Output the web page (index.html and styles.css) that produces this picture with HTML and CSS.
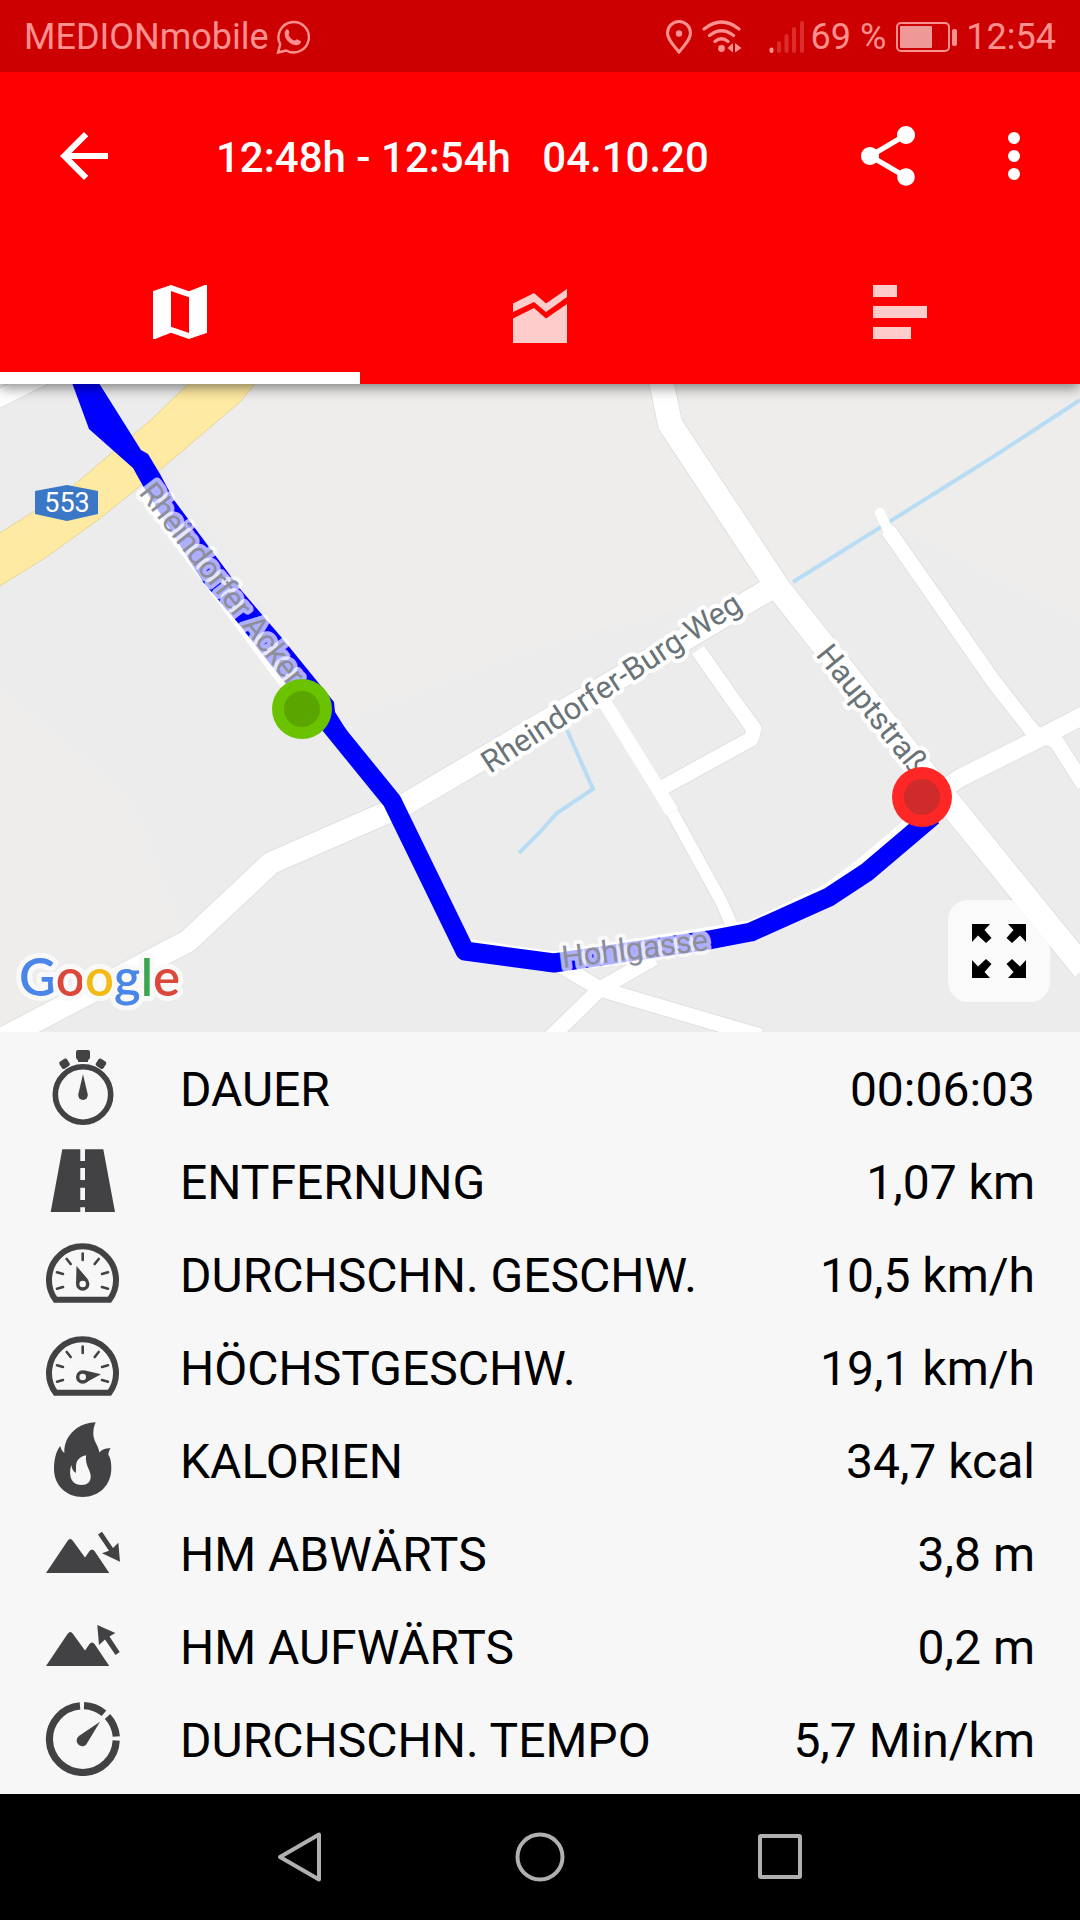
FILE: index.html
```html
<!DOCTYPE html>
<html lang="de">
<head>
<meta charset="utf-8">
<meta name="viewport" content="width=device-width, initial-scale=1">
<title>12:48h - 12:54h 04.10.20</title>
<link rel="stylesheet" href="styles.css">
</head>
<body>
<div class="screen">
  <header class="header">
    <div class="status">
      <span>MEDIONmobile</span>
      <svg class="status-whatsapp" width="34" height="34" viewBox="0 0 34 34" fill="none" stroke="currentColor" stroke-width="2.4">
        <path d="M2 32.500l2.200-8.200A15.200 15.200 0 1 1 10.200 30.500z"/>
        <path d="M9.500 10.500c1.500-2.300 3-1.200 3.800 1.500.5 1.600-1.100 2-.7 3 1.300 2.800 3.300 4.600 5.800 5.600 1.200.4 1.600-1.700 3-1.200 3.500 1.400 4.300 2 3 3.900-2 2.800-6 2.300-9.600.2-4.500-2.700-7.700-8.500-5.300-13z" fill="currentColor" stroke="none"/>
      </svg>
      <div class="status-right">
        <svg width="28" height="34" viewBox="0 0 28 34" fill="none" stroke="currentColor" stroke-width="3">
          <path d="M14 32C8 25 2.500 19 2.500 13a11.500 11.500 0 0 1 23 0C25.500 19 20 25 14 32z"/>
          <circle cx="14" cy="13.500" r="3.200" fill="currentColor" stroke="none"/>
        </svg>
        <svg class="status-wifi" width="42" height="34" viewBox="0 0 42 34" fill="none" stroke="currentColor" stroke-width="3.200" stroke-linecap="round">
          <path d="M3 9Q20.500-5 38 9M8.500 15.500q12-9.500 24 0M14 21.500q6.500-5.500 13 0"/>
          <circle cx="20.500" cy="28.500" r="3.400" fill="currentColor" stroke="none"/>
          <path d="M32 23v9.500l-5.500-4.500zM34 23l6.500 5-6.500 4.500z" fill="currentColor" stroke="none"/>
        </svg>
        <svg width="36" height="34" viewBox="0 0 36 34" stroke-width="4" stroke-linecap="round" stroke="#dc2c2c">
          <path d="M2.500 29.500v1.500" stroke="currentColor"/>
          <path d="M10 23v8M17.500 16v15M25 9v22M33 3v28"/>
        </svg>
        <span class="status-percent">69 %</span>
        <svg width="62" height="30" viewBox="0 0 62 30">
          <rect x="1" y="1" width="52" height="28" rx="4" fill="none" stroke="currentColor" stroke-width="2"/>
          <rect x="4" y="4" width="32" height="22" rx="1" fill="#ee9898"/>
          <rect x="56" y="7" width="5" height="17" rx="2" fill="currentColor"/>
        </svg>
        <time class="status-time">12:54</time>
      </div>
    </div>

    <div class="appbar">
      <button class="icon-button" type="button" aria-label="Zurück">
        <svg viewBox="0 0 24 24"><path d="M20 11H7.830l5.590-5.590L12 4l-8 8 8 8 1.410-1.410L7.830 13H20v-2z"/></svg>
      </button>
      <h1 class="title">12:48h - 12:54h&nbsp;&nbsp; 04.10.20</h1>
      <button class="icon-button" type="button" aria-label="Teilen">
        <svg viewBox="0 0 24 24"><path d="M18 16.080c-.76 0-1.440.3-1.960.77L8.910 12.700c.05-.23.090-.46.090-.7s-.04-.47-.09-.7l7.050-4.110c.54.5 1.250.81 2.040.81 1.660 0 3-1.340 3-3s-1.340-3-3-3-3 1.340-3 3c0 .24.040.47.090.7L8.040 9.810C7.500 9.310 6.790 9 6 9c-1.660 0-3 1.340-3 3s1.340 3 3 3c.79 0 1.500-.31 2.040-.81l7.120 4.160c-.05.21-.08.43-.08.65 0 1.610 1.310 2.920 2.920 2.920s2.920-1.310 2.920-2.920-1.310-2.920-2.920-2.920z"/></svg>
      </button>
      <button class="icon-button" type="button" aria-label="Mehr">
        <svg viewBox="0 0 24 24"><circle cx="12" cy="6" r="2"/><circle cx="12" cy="12" r="2"/><circle cx="12" cy="18" r="2"/></svg>
      </button>
    </div>

    <nav class="tabs" role="tablist">
      <button class="tab tab-active" type="button" role="tab" aria-selected="true" aria-label="Karte">
        <svg viewBox="0 0 24 24"><path d="M20.500 3l-.16.030L15 5.100 9 3 3.360 4.900c-.21.070-.36.250-.36.480V20.500c0 .28.220.5.500.5l.16-.03L9 18.900l6 2.100 5.640-1.900c.21-.07.360-.25.360-.48V3.500c0-.28-.22-.5-.5-.5zM15 19l-6-2.110V5l6 2.110V19z"/><path d="M3 5v16h1V5zM20 3v16h1V3z"/></svg>
      </button>
      <button class="tab" type="button" role="tab" aria-selected="false" aria-label="Diagramm">
        <svg viewBox="0 0 72 72"><path d="M9 43.500L30 32.500 51 42.500 63 28V67H9z" fill="none"/><path d="M9 42.500L30 32 42 42.500 63 28V67H9z"/><path d="M9 27.500L30 17 42 27.500 63 13v8L42 36 30 26 9 36z"/></svg>
      </button>
      <button class="tab" type="button" role="tab" aria-selected="false" aria-label="Runden">
        <svg viewBox="0 0 72 72"><path d="M9 9h24v12H9zM9 30h54v12H9zM9 51h38v12H9z"/></svg>
      </button>
    </nav>
  </header>

  <main class="content">
    <section class="map" aria-label="Karte">
      <svg class="map-canvas" viewBox="0 384 1080 648" preserveAspectRatio="xMidYMid slice">
        <rect y="384" width="1080" height="648" fill="#ececec"/>
        <path d="M200 384H1080V620L880 515 790 582 540 645 340 720 180 480zM0 690L130 800 180 930 0 1026z" fill="#eeedec"/>

        <path d="M793 582L996 455 1022 438 1080 400M567 730L593 789 557 813 540 832 519 853" fill="none" stroke="#b9dcf5" stroke-width="4"/>

        <path d="M192 380L151 420 114 451 74 485 33 512-5 536V589L45 558 98 520 160 470 241 401 258 380z" fill="#feeaa2" stroke="#e6d49a"/>

        <g fill="none" stroke-linejoin="round">
          <g stroke="#e0e0df">
            <path d="M-10 403L48 374" stroke-width="19"/>
            <path d="M661 380L670 424 779 589 922 770 952 806 1084 969" stroke-width="26"/>
            <path d="M-10 1045L188 941 271 863 404 805 775 586" stroke-width="24"/>
            <path d="M698 650L733 700 754 729 751 739 660 789" stroke-width="17"/>
            <path d="M600 695L657 787 672 812 721 901 734 930" stroke-width="14"/>
            <path d="M940 792L960 778 1040 738 1084 715" stroke-width="20"/>
            <path d="M888 530L994 682 1034 733 1056 741 1084 785" stroke-width="17"/>
            <path d="M555 962L600 989 760 1036M550 1038L600 989 654 958" stroke-width="17"/>
          </g>
          <g stroke="#fff">
            <path d="M-10 403L48 374" stroke-width="17"/>
            <path d="M661 380L670 424 779 589 922 770 952 806 1084 969" stroke-width="24"/>
            <path d="M-10 1045L188 941 271 863 404 805 775 586" stroke-width="22"/>
            <path d="M698 650L733 700 754 729 751 739 660 789" stroke-width="15"/>
            <path d="M600 695L657 787 672 812" stroke-width="14"/>
            <path d="M672 812L721 901 734 930" stroke-width="12"/>
            <path d="M940 792L960 778 1040 738 1084 715" stroke-width="18"/>
            <path d="M880 513L888 530" stroke-width="10" stroke-linecap="round"/>
            <path d="M888 530L994 682 1034 733 1056 741 1084 785" stroke-width="15"/>
            <path d="M555 962L600 989 760 1036M550 1038L600 989 654 958" stroke-width="15"/>
            <path d="M465 948L554 961 751 930 829 893 866 865 928 812" stroke-width="19"/>
            <path d="M146 488L292 684" stroke-width="22"/>
          </g>
        </g>

        <path d="M71 380L89 429 133 468 143 486 203 582 238 623 300 702 392 802 335 712 334 702 282 638 241 590 174 500 160 474 148 454 141 450 97 380z" fill="#00f"/>
        <path d="M318 710L392 801 465 951 554 963 709 940 751 932 829 897 867 872 933 816" fill="none" stroke="#00f" stroke-width="19" stroke-linejoin="round"/>

        <path d="M35 491L67 485 98 491V514L67 521 35 514z" fill="#3a77c6"/>
        <text class="shield" x="67" y="512">553</text>

        <text class="street" transform="translate(490 774) rotate(-33)">Rheindorfer-Burg-Weg</text>
        <text class="street" transform="translate(815 655) rotate(51)">Hauptstraße</text>
        <text class="street street-under" transform="translate(138 493) rotate(52)">Rheindorfer Acker</text>
        <text class="street street-under" transform="translate(563 968) rotate(-7)">Hohlgasse</text>

        <circle cx="302" cy="709" r="30" fill="#6bc300"/><circle cx="302" cy="709" r="18" fill="#5ba500"/>
        <circle cx="922" cy="797" r="30" fill="#ff2626"/><circle cx="922" cy="797" r="18" fill="#cf2b2b"/>

        <text class="logo" x="19" y="996"><tspan fill="#4a86e8">G</tspan><tspan fill="#db473a">o</tspan><tspan fill="#f3ba15">o</tspan><tspan fill="#4a86e8">g</tspan><tspan fill="#3da653">l</tspan><tspan fill="#db473a">e</tspan></text>
      </svg>
      <button class="fullscreen" type="button" aria-label="Vollbild">
        <svg width="54" height="54" viewBox="0 0 54 54">
          <path id="corner" d="M0 0H18L12.500 6 19.500 14 14 19 6 11.500 0 18z"/>
          <use href="#corner" transform="matrix(-1 0 0 1 54 0)"/>
          <use href="#corner" transform="matrix(1 0 0 -1 0 54)"/>
          <use href="#corner" transform="matrix(-1 0 0 -1 54 54)"/>
        </svg>
      </button>
    </section>

    <dl class="stats">
      <div class="stat">
        <svg class="stat-icon" viewBox="0 0 75 75">
          <circle cx="38" cy="44.500" r="27.700" fill="none" stroke="currentColor" stroke-width="5.600"/>
          <path d="M33 0h10q2 0 2 2v6l-2 2.500V12H33v-1.500L31 8V2q0-2 2-2z"/>
          <rect x="15" y="9.500" width="9" height="8.500" rx="2" transform="rotate(-32 19.500 13.700)"/>
          <rect x="51.500" y="9.500" width="9" height="8.500" rx="2" transform="rotate(32 56 13.700)"/>
          <path d="M38 24.300l4.700 20a4.800 4.800 0 1 1-9.400 0z"/>
        </svg>
        <dt>DAUER</dt><dd>00:06:03</dd>
      </div>
      <div class="stat">
        <svg class="stat-icon" viewBox="0 0 75 75"><path fill-rule="evenodd" d="M17.300 6.300H58.300L70 69H5.700zM35.300 6.300V18H40V6.300zM35.300 25V37H40V25zM35.300 44.700V57H40V44.700zM35.300 64.300V69H40V64.300z"/></svg>
        <dt>ENTFERNUNG</dt><dd>1,07 km</dd>
      </div>
      <div class="stat">
        <svg class="stat-icon" viewBox="0 0 75 75">
          <g id="dial" fill="none" stroke="currentColor">
            <path d="M10.500 63.700A33.500 33.500 0 1 1 64.500 63.700z" stroke-width="6"/>
            <path d="M37.700 17.500V24M21.700 23l4 5M53.700 23l-4 5M12 36.300l6 1.700M63 36.300l-6 1.700M12 52.700l6-1.700M63 52.700l-6-1.700" stroke-width="2.600" stroke-linecap="round"/>
            <circle cx="37.700" cy="48" r="5" stroke-width="3.400"/>
          </g>
          <path d="M31.500 30L43.500 44Q37 40 34 45L31 48z"/>
        </svg>
        <dt>DURCHSCHN. GESCHW.</dt><dd>10,5 km/h</dd>
      </div>
      <div class="stat">
        <svg class="stat-icon" viewBox="0 0 75 75">
          <use href="#dial"/>
          <path d="M56 45.300L39 54.500Q43 52 43 48 43 44 39 41.300z"/>
        </svg>
        <dt>HÖCHSTGESCHW.</dt><dd>19,1 km/h</dd>
      </div>
      <div class="stat">
        <svg class="stat-icon" viewBox="0 0 75 75"><path fill-rule="evenodd" d="M50.700.3C43 .5 37 2.500 31.700 6.300 24 12 19 20 19.300 31 17 29 16 27 15.300 24 11 29 9 38 9 47 9 63 21 75 37.700 75 54 75 66.500 63 66.300 46 66.300 40 65.500 36 63.300 32.500 63.500 30 64.500 28 65.700 26.300 61 26 57.500 27 54.300 30.500 54 24 48.500 20 48.300 12 48.300 7 49 4 50.700.3zM41 33.300C36 34 32 38 31.300 41.500 30.500 45 31.500 48 30.700 51 28 49 27 47 26.300 43 25 47 25 50 25.300 53 26 60 31 63 36.700 63 42 63 46 60 45.700 54 45.500 48 40 44 41 33.300z"/></svg>
        <dt>KALORIEN</dt><dd>34,7 kcal</dd>
      </div>
      <div class="stat">
        <svg class="stat-icon" viewBox="0 0 75 75">
          <path id="peaks" d="M1 58L22.500 26Q25.300 22 28 26L40 42.500 44.500 36Q47 33 49.500 36L64.300 58z"/>
          <path d="M53 19.500L57 16.800 68 33 73.300 27.700 75 46.700 57 38.300 64 35.800z"/>
        </svg>
        <dt>HM ABWÄRTS</dt><dd>3,8 m</dd>
      </div>
      <div class="stat">
        <svg class="stat-icon" viewBox="0 0 75 75">
          <use href="#peaks"/>
          <path d="M52.300 17L70.300 25 64.500 28.500 74.700 44 70.500 47 60 31.500 54 37z"/>
        </svg>
        <dt>HM AUFWÄRTS</dt><dd>0,2 m</dd>
      </div>
      <div class="stat">
        <svg class="stat-icon" viewBox="0 0 75 75">
          <path d="M71.200 39.500A33.400 33.400 0 1 1 35 4.800M39 4.600A33.400 33.400 0 0 1 59 12.200M62.500 15.500A33.400 33.400 0 0 1 71.300 35.500" fill="none" stroke="currentColor" stroke-width="7.200"/>
          <path d="M55 20.700L42.500 41.500a5.600 5.600 0 1 1-8.600-6.400z"/>
        </svg>
        <dt>DURCHSCHN. TEMPO</dt><dd>5,7 Min/km</dd>
      </div>
    </dl>
  </main>

  <footer class="navbar">
    <button class="nav-button" type="button" aria-label="Zurück">
      <svg width="52" height="52" viewBox="0 0 52 52"><path d="M45 3.500V48.500L6 26z"/></svg>
    </button>
    <button class="nav-button" type="button" aria-label="Startseite">
      <svg width="52" height="52" viewBox="0 0 52 52"><circle cx="26" cy="26" r="22.500"/></svg>
    </button>
    <button class="nav-button" type="button" aria-label="Übersicht">
      <svg width="52" height="52" viewBox="0 0 52 52"><rect x="6" y="5" width="40" height="41" rx="1"/></svg>
    </button>
  </footer>
</div>
</body>
</html>
```
FILE: styles.css
```css
* {
  box-sizing: border-box;
}

body {
  margin: 0;
  font-family: Roboto, "Liberation Sans", sans-serif;
  background: #f7f7f7;
  color: #000;
}

button {
  padding: 0;
  border: 0;
  background: none;
  color: inherit;
  cursor: pointer;
}

svg {
  display: block;
  flex: none;
}

.screen {
  display: flex;
  flex-direction: column;
  min-height: 100vh;
}

/* Header */
.header {
  position: relative;
  z-index: 1;
  background: #f00;
  color: #fff;
  box-shadow: 0 4px 12px rgba(0, 0, 0, 0.45);
}

.status {
  display: flex;
  align-items: center;
  height: 72px;
  padding: 2px 24px 0;
  background: #c00;
  color: #ff9090;
  font-size: 36px;
  line-height: 40px;
}

.status-whatsapp {
  margin-left: 7px;
}

.status-right {
  display: flex;
  align-items: center;
  margin-left: auto;
}

.status-wifi {
  margin: 0 26px 0 8px;
}

.status-percent {
  margin: 0 10px 0 6px;
}

.status-time {
  margin-left: 8px;
}

.appbar {
  display: flex;
  align-items: center;
  gap: 54px;
  height: 168px;
  padding: 0 30px 0 48px;
}

.icon-button svg,
.tab svg {
  width: 72px;
  height: 72px;
  fill: currentColor;
}

.title {
  flex: 1;
  margin: 0;
  padding: 3px 0 0 42px;
  font-size: 42px;
  font-weight: 500;
  line-height: 48px;
  white-space: nowrap;
}

.tabs {
  display: grid;
  grid-template-columns: repeat(3, 1fr);
}

.tab {
  display: flex;
  align-items: center;
  justify-content: center;
  height: 144px;
  border-top: 12px solid transparent;
  border-bottom: 12px solid transparent;
  color: #ffcccc;
}

.tab-active {
  border-bottom-color: #fff;
  color: #fff;
}

/* Map */
.content {
  display: flex;
  flex: 1;
  flex-direction: column;
}

.map {
  position: relative;
  display: flex;
  flex: 1;
  min-height: 320px;
  overflow: hidden;
}

.map-canvas {
  flex: 1;
  width: 100%;
  min-width: 0;
}

.street {
  font-size: 31px;
  fill: #6a7377;
  stroke: #fff;
  stroke-width: 8px;
  stroke-linejoin: round;
  paint-order: stroke;
}

.street-under {
  fill: #8c8e98;
  stroke: rgba(255, 255, 255, 0.7);
}

.shield {
  font-size: 27px;
  fill: #fff;
  text-anchor: middle;
}

.logo {
  font-family: Lato, sans-serif;
  font-size: 51px;
  font-weight: 600;
  stroke: #f9f9f9;
  stroke-width: 10px;
  stroke-linejoin: round;
  paint-order: stroke;
}

.fullscreen {
  position: absolute;
  right: 30px;
  bottom: 30px;
  display: grid;
  place-items: center;
  width: 102px;
  height: 102px;
  border-radius: 20px;
  background: rgba(255, 255, 255, 0.72);
}

/* Statistics */
.stats {
  margin: 0;
  padding: 9px 45px;
}

.stat {
  display: flex;
  align-items: center;
  height: 93px;
  font-size: 48px;
  line-height: 56px;
}

.stat-icon {
  width: 75px;
  height: 75px;
  margin-right: 60px;
  fill: currentColor;
  color: #424244;
}

.stat dt,
.stat dd {
  margin: 0;
  padding-top: 5px;
  white-space: nowrap;
}

.stat dd {
  margin-left: auto;
}

/* System navigation */
.navbar {
  display: flex;
  justify-content: center;
  height: 126px;
  background: #000;
}

.nav-button {
  display: grid;
  place-items: center;
  width: 240px;
}

.nav-button svg {
  fill: none;
  stroke: #b0b0b0;
  stroke-width: 4px;
  stroke-linejoin: round;
}
```
